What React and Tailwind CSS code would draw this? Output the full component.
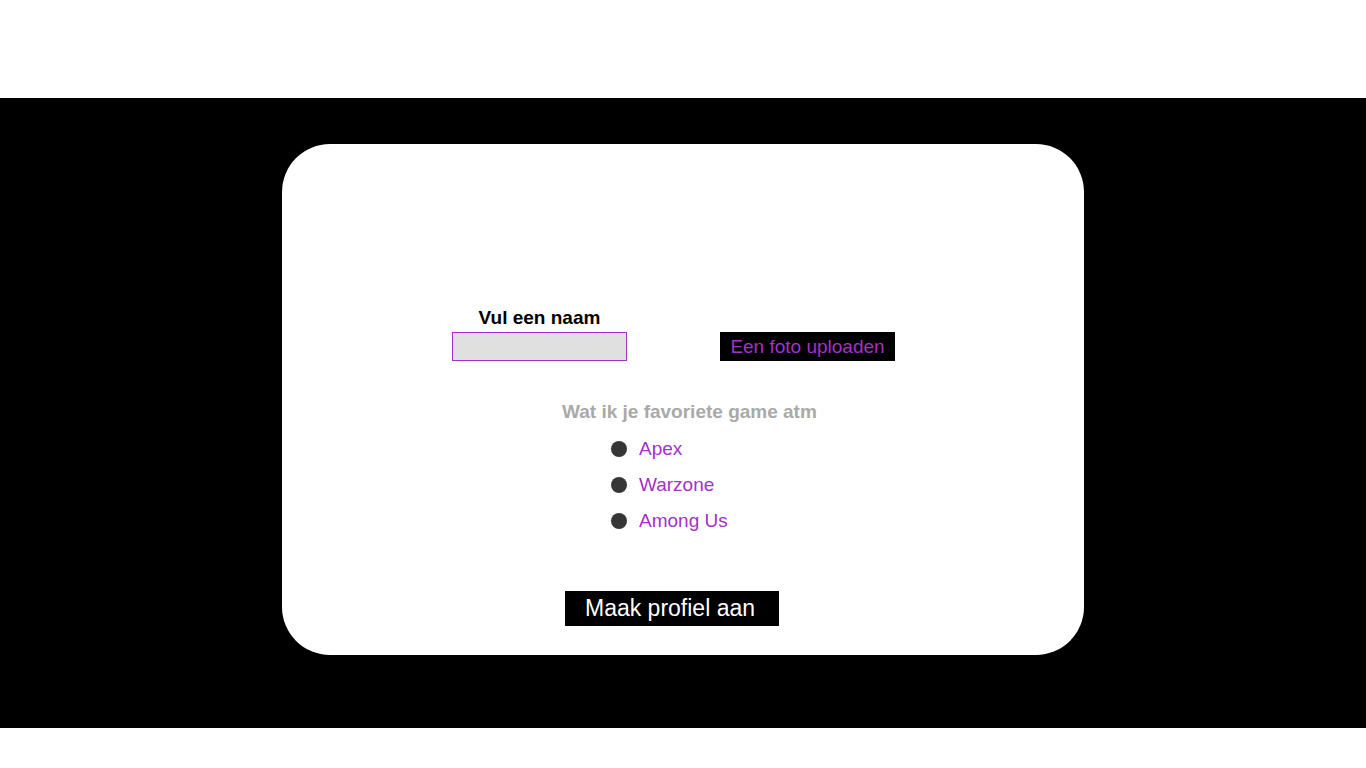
import React from 'react';

const games = ['Apex', 'Warzone', 'Among Us'];

const App = () => {
  return (
    <div className="w-[1366px] h-[768px] bg-white font-['Liberation_Sans',Arial,sans-serif]">
      <div className="h-[98px]" />
      <div className="h-[630px] bg-black pt-[46px]">
        <div className="ml-[282px] w-[802px] h-[511px] bg-white rounded-[48px] pt-[163px]">
          <div className="flex items-end ml-[170px]">
            <div className="w-[175px] flex flex-col items-center">
              <label className="text-[19px] leading-[21px] font-bold text-black mb-[4px]">Vul een naam</label>
              <input type="text" className="w-[175px] h-[29px] bg-[#e0e0e0] border border-[#a431c6] outline-none" />
            </div>
            <button className="ml-[93px] w-[175px] h-[29px] bg-black text-[#a431c6] text-[19px] leading-[21px] text-center">
              Een foto uploaden
            </button>
          </div>
          <p className="ml-[280px] mt-[40px] text-[19px] leading-[21px] font-bold text-[#a9a9a9]">Wat ik je favoriete game atm</p>
          <ul className="ml-[329px] mt-[16px] flex flex-col gap-[15px]">
            {games.map(g => (
              <li key={g} className="flex items-center gap-[12px] h-[21px]">
                <span className="w-[16px] h-[16px] rounded-full bg-[#363636]" />
                <span className="text-[19px] leading-[21px] text-[#a431c6]">{g}</span>
              </li>
            ))}
          </ul>
          <button className="ml-[283px] mt-[60px] w-[214px] h-[35px] bg-black text-white text-[23px] leading-[25px] pr-[4px]">
            Maak profiel aan
          </button>
        </div>
      </div>
    </div>
  );
};
export default App;
